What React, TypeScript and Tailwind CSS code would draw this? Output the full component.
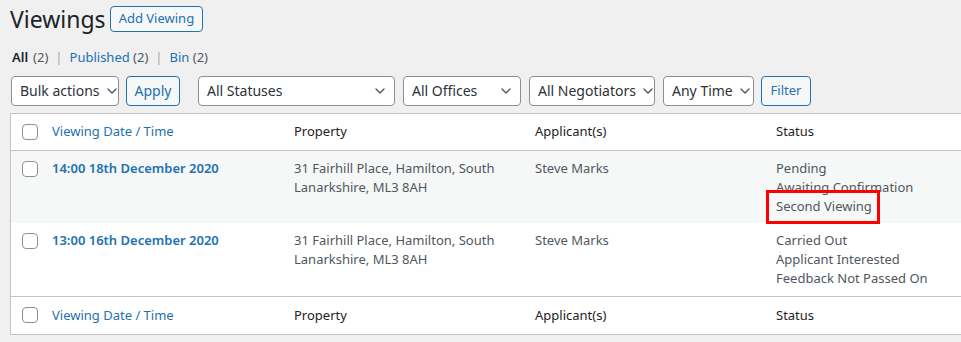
import { ChevronDown } from "lucide-react"

const rows = [
  {
    date: "14:00 18th December 2020",
    property: ["31 Fairhill Place, Hamilton, South", "Lanarkshire, ML3 8AH"],
    applicant: "Steve Marks",
    status: ["Pending", "Awaiting Confirmation", "Second Viewing"],
    highlight: true,
  },
  {
    date: "13:00 16th December 2020",
    property: ["31 Fairhill Place, Hamilton, South", "Lanarkshire, ML3 8AH"],
    applicant: "Steve Marks",
    status: ["Carried Out", "Applicant Interested", "Feedback Not Passed On"],
    highlight: false,
  },
]

const Select = ({ label, width }: { label: string; width: string }) => (
  <div
    className={`${width} h-[30px] flex items-center justify-between gap-1 whitespace-nowrap rounded border border-[#8c8f94] bg-white pl-2 pr-[6px] text-[14px] text-[#2c3338]`}
  >
    <span>{label}</span>
    <ChevronDown size={16} strokeWidth={2} className="shrink-0 text-[#50575e]" />
  </div>
)

const Checkbox = () => (
  <span className="block w-4 h-4 rounded-[4px] border border-[#8c8f94] bg-white" />
)

const HeaderRow = ({ top }: { top?: boolean }) => (
  <tr className={`h-[37px] ${top ? "border-b" : "border-t"} border-[#c3c4c7]`}>
    <td className="pl-[11px] align-middle">
      <Checkbox />
    </td>
    <td className="px-2 text-[#2271b1]">Viewing Date / Time</td>
    <td className="px-2 text-[#1d2327]">Property</td>
    <td className="px-2 text-[#1d2327]">Applicant(s)</td>
    <td className="px-2 text-[#1d2327]">Status</td>
  </tr>
)

export default function App() {
  return (
    <div
      className="w-[961px] h-[342px] overflow-hidden bg-[#f0f0f1] text-[13px] text-[#3c434a]"
      style={{ fontFamily: '"Noto Sans", "Open Sans", sans-serif' }}
    >
      <div className="flex items-center gap-[4px] pl-[10px] pt-[6px]">
        <h1 className="text-[23px] leading-[26px] font-normal text-[#1d2327]">Viewings</h1>
        <button className="h-[26px] px-[8px] rounded border border-[#2271b1] bg-[#f6f7f7] text-[13px] text-[#2271b1]">
          Add Viewing
        </button>
      </div>

      <div className="flex items-center gap-[5px] pl-[12px] mt-[16px] text-[13px]">
        <span className="text-[#1d2327] font-semibold">All</span>
        <span className="text-[#50575e]">(2)</span>
        <span className="text-[#a7aaad] px-[2px]">|</span>
        <span className="text-[#2271b1]">Published <span className="text-[#50575e]">(2)</span></span>
        <span className="text-[#a7aaad] px-[2px]">|</span>
        <span className="text-[#2271b1]">Bin <span className="text-[#50575e]">(2)</span></span>
      </div>

      <div className="flex items-center pl-[11px] mt-[8px]">
        <Select label="Bulk actions" width="w-[108px]" />
        <button className="ml-[7px] h-[30px] w-[54px] rounded border border-[#2271b1] bg-[#f6f7f7] text-[14px] text-[#2271b1]">
          Apply
        </button>
        <div className="ml-[18px] flex items-center gap-[8px]">
          <Select label="All Statuses" width="w-[197px]" />
          <Select label="All Offices" width="w-[118px]" />
          <Select label="All Negotiators" width="w-[126px]" />
          <Select label="Any Time" width="w-[91px]" />
          <button className="h-[30px] w-[50px] -ml-[1px] rounded border border-[#2271b1] bg-[#f6f7f7] text-[13px] text-[#2271b1]">
            Filter
          </button>
        </div>
      </div>

      <div className="ml-[10px] mt-[7px] w-[961px] border border-[#c3c4c7] bg-white">
        <table className="w-full border-collapse table-fixed text-left">
          <colgroup>
            <col className="w-[33px]" />
            <col className="w-[242px]" />
            <col className="w-[241px]" />
            <col className="w-[241px]" />
            <col />
          </colgroup>
          <thead>
            <HeaderRow top />
          </thead>
          <tbody>
            {rows.map((r, i) => (
              <tr key={r.date} className={`${i === 0 ? "h-[72px] bg-[#f6f7f7]" : "h-[74px] bg-white"} align-top leading-[19px]`}>
                <td className="pl-[11px] pt-[10px]">
                  <Checkbox />
                </td>
                <td className="px-2 pt-[8px] font-semibold text-[#2271b1]">{r.date}</td>
                <td className="px-2 pt-[8px] text-[#50575e]">
                  {r.property.map((l) => (
                    <div key={l}>{l}</div>
                  ))}
                </td>
                <td className="px-2 pt-[8px] text-[#50575e]">{r.applicant}</td>
                <td className="px-2 pt-[8px] text-[#50575e]">
                  <div className="relative">
                    {r.status.map((s) => (
                      <div key={s}>{s}</div>
                    ))}
                    {r.highlight && (
                      <span className="absolute left-[-10px] top-[31px] w-[114px] h-[34px] border-[3px] border-[#ff0000]" />
                    )}
                  </div>
                </td>
              </tr>
            ))}
          </tbody>
          <tfoot>
            <HeaderRow />
          </tfoot>
        </table>
      </div>
    </div>
  )
}
